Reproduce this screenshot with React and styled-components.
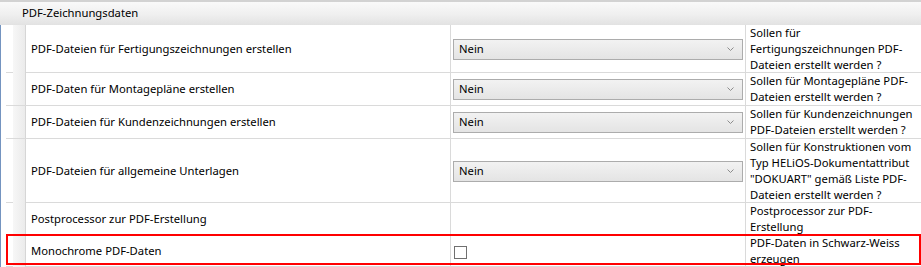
import React from "react";
import styled, { createGlobalStyle } from "styled-components";

const GlobalStyle = createGlobalStyle`
  html, body { margin: 0; padding: 0; background: #ffffff; }
  body {
    font-family: "Noto Sans", "Open Sans", "DejaVu Sans", sans-serif;
    font-size: 11.25px;
    color: #000;
  }
  * { box-sizing: border-box; }
`;

const Frame = styled.div`
  width: 921px;
  height: 267px;
  overflow: hidden;
  background: #fff;
`;

const Header = styled.div`
  height: 25px;
  border-top: 2px solid #d2d2d2;
  background: linear-gradient(to bottom, #f9f9f9 0%, #efefef 55%, #e2e2e2 100%);
  padding: 3px 0 0 22px;
  line-height: 16px;
  color: #000;
`;

const Body = styled.div`
  border-left: 1px solid #7494c0;
  padding-left: 5px;
  height: 242px;
`;

const Row = styled.div`
  position: relative;
  display: grid;
  grid-template-columns: 7px 13px 425px 295px 1fr;
  height: ${(p) => p.$h + 1}px;
  border-bottom: 1px solid #dadada;

  ${(p) =>
    p.$highlight &&
    `
    &::after {
      content: "";
      position: absolute;
      left: 0;
      right: 0;
      top: -1px;
      bottom: 1px;
      border: 2px solid #ff0000;
      pointer-events: none;
    }
  `}
`;

const Gutter = styled.div``;

const Indent = styled.div`
  background: linear-gradient(to right, #f7f7f7, #ebebeb);
  border-right: 1px solid #d6d6d6;
`;

const LabelCell = styled.div`
  display: flex;
  align-items: center;
  padding-left: 5px;
  border-right: 1px solid #dadada;
  white-space: nowrap;
  line-height: 16px;
`;

const ValueCell = styled.div`
  display: flex;
  align-items: center;
  padding: 0 2px;
  border-right: 1px solid #dadada;
`;

const DescCell = styled.div`
  padding-left: 4px;
  line-height: 16px;
  white-space: nowrap;
`;

const DescLine = styled.div``;

const Select = styled.div`
  position: relative;
  width: 290px;
  height: 21px;
  border: 1px solid #acacac;
  background: linear-gradient(to bottom, #f2f2f2 0%, #ebebeb 50%, #e4e4e4 100%);
  display: flex;
  align-items: center;
  padding-left: 5px;
  line-height: 16px;
`;

const Chevron = styled.svg`
  position: absolute;
  right: 8px;
  top: 7px;
`;

const Checkbox = styled.div`
  width: 13px;
  height: 13px;
  margin: 2px 0 0 1px;
  border: 1px solid #707070;
  background: #fff;
`;

const rows = [
  {
    h: 47,
    label: "PDF-Dateien für Fertigungszeichnungen erstellen",
    type: "select",
    desc: ["Sollen für", "Fertigungszeichnungen PDF-", "Dateien erstellt werden ?"],
  },
  {
    h: 32,
    label: "PDF-Daten für Montagepläne erstellen",
    type: "select",
    desc: ["Sollen für Montagepläne PDF-", "Dateien erstellt werden ?"],
  },
  {
    h: 32,
    label: "PDF-Dateien für Kundenzeichnungen erstellen",
    type: "select",
    desc: ["Sollen für Kundenzeichnungen", "PDF-Dateien erstellt werden ?"],
  },
  {
    h: 63,
    label: "PDF-Dateien für allgemeine Unterlagen",
    type: "select",
    desc: [
      "Sollen für Konstruktionen vom",
      "Typ HELiOS-Dokumentattribut",
      "\"DOKUART\" gemäß Liste PDF-",
      "Dateien erstellt werden ?",
    ],
  },
  {
    h: 31,
    label: "Postprocessor zur PDF-Erstellung",
    type: "none",
    desc: ["Postprocessor zur PDF-", "Erstellung"],
  },
  {
    h: 31,
    label: "Monochrome PDF-Daten",
    type: "checkbox",
    highlight: true,
    desc: ["PDF-Daten in Schwarz-Weiss", "erzeugen"],
  },
];

function Value({ type }) {
  if (type === "select") {
    return (
      <Select>
        Nein
        <Chevron width="7" height="4" viewBox="0 0 7 4">
          <path d="M0.5 0.5 L3.5 3.5 L6.5 0.5" fill="none" stroke="#8c8c8c" strokeWidth="1" />
        </Chevron>
      </Select>
    );
  }
  if (type === "checkbox") return <Checkbox />;
  return null;
}

export default function App() {
  return (
    <>
      <GlobalStyle />
      <Frame>
        <Header>PDF-Zeichnungsdaten</Header>
        <Body>
          {rows.map((r, i) => (
            <Row key={i} $h={r.h} $highlight={r.highlight}>
              <Gutter />
              <Indent />
              <LabelCell>{r.label}</LabelCell>
              <ValueCell>
                <Value type={r.type} />
              </ValueCell>
              <DescCell>
                {r.desc.map((d, j) => (
                  <DescLine key={j}>{d}</DescLine>
                ))}
              </DescCell>
            </Row>
          ))}
        </Body>
      </Frame>
    </>
  );
}
